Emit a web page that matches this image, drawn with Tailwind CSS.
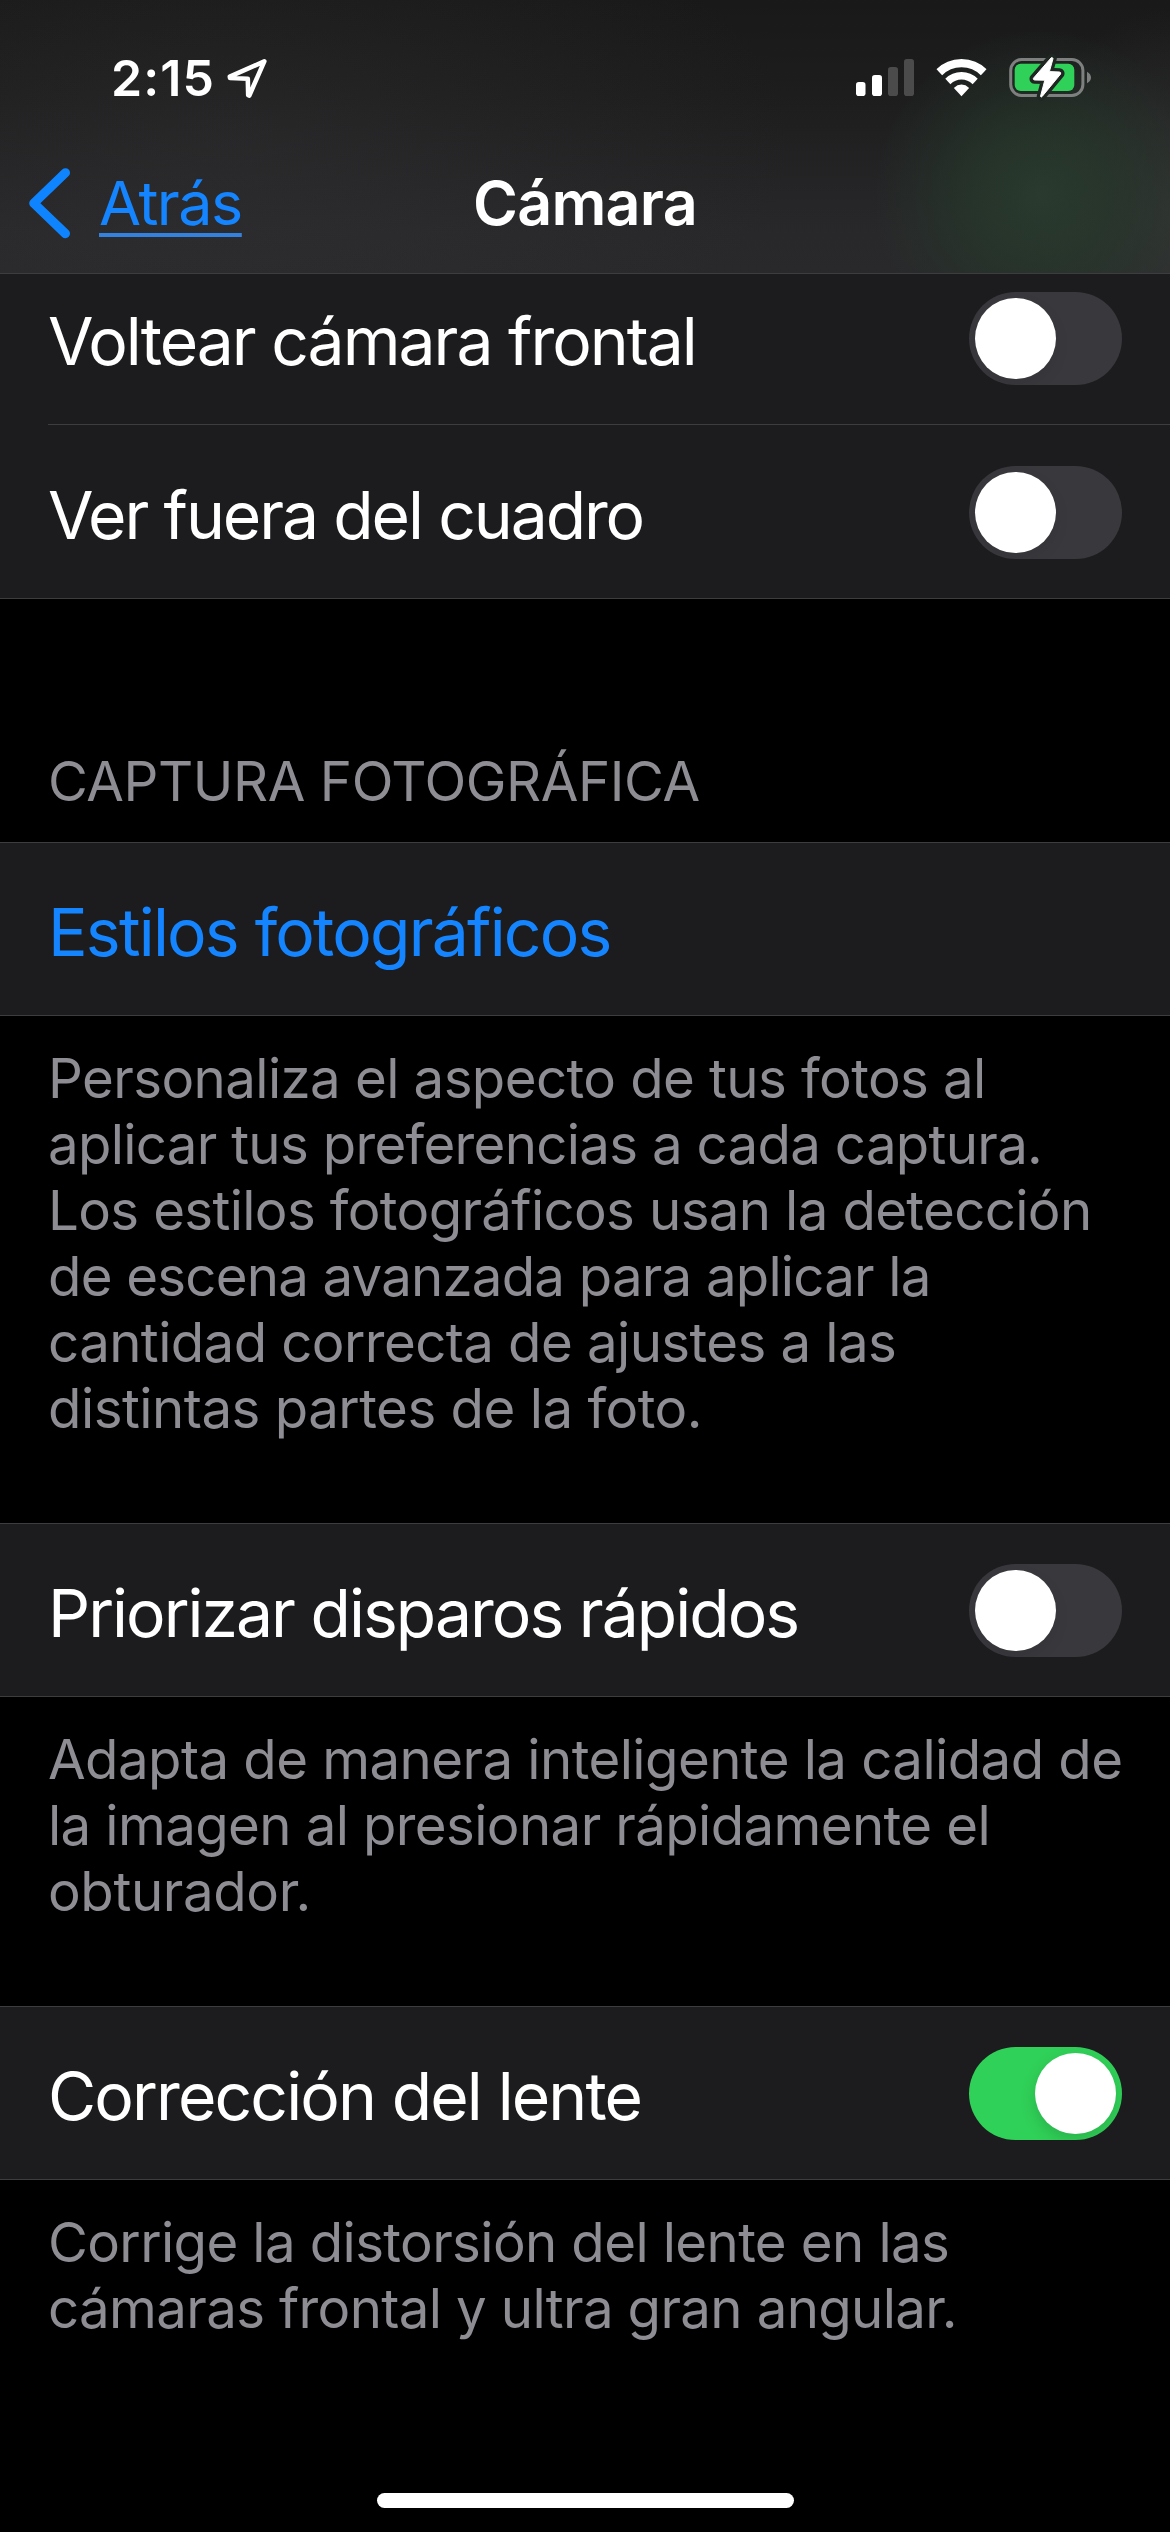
<!DOCTYPE html>
<html lang="es">
<head>
<meta charset="utf-8">
<title>Cámara</title>
<script src="https://cdn.jsdelivr.net/npm/@tailwindcss/browser@4"></script>
</head>
<body class="bg-black">
<div class="flex h-[2532px] w-[1170px] flex-col overflow-hidden bg-black font-['Inter',sans-serif] text-white">

  <!-- Status bar and navigation bar -->
  <header class="h-[274px] shrink-0 border-b border-[#3d3d40] bg-[radial-gradient(ellipse_165px_165px_at_1040px_195px,rgba(42,60,47,0.9)_0%,rgba(38,56,43,0.75)_40%,rgba(36,50,40,0)_100%),radial-gradient(ellipse_150px_200px_at_1170px_210px,rgba(54,56,55,0.7)_0%,rgba(50,50,50,0)_100%),radial-gradient(ellipse_560px_260px_at_230px_140px,rgba(60,60,62,0.28)_0%,rgba(50,50,52,0)_100%),linear-gradient(to_bottom,#19191a_0%,#1d1d1e_35%,#28282a_85%,#29292b_100%)]">
    <div class="flex h-[118px] items-start justify-between pr-[79px] pl-[111px]">
      <div class="flex items-start gap-[11px] pt-[53px]">
        <span class="w-[104px] text-[50px] leading-[50px] font-semibold tracking-[1.1px]">2:15</span>
        <svg class="mt-[5px]" width="42" height="42" viewBox="225 58 42 42" fill="none" stroke="#fff" stroke-width="4.6" stroke-linejoin="round"><path d="M263.3 61.4 L228.8 76.6 L229 78 L246.8 78.8 L247.2 95.2 L248.3 95.6 Z"/></svg>
      </div>
      <svg class="mt-[54px]" width="236" height="48" viewBox="855 54 236 48">
        <defs><clipPath id="wedge"><path d="M961.5 96.3 L921.5 53 H1001.5 Z"/></clipPath></defs>
        <rect x="856" y="82" width="9.5" height="14" rx="2.8" fill="#fff"/>
        <rect x="872" y="75" width="10" height="21" rx="2.8" fill="#fff"/>
        <rect x="888" y="67" width="10" height="29" rx="2.8" fill="#4b4b4c"/>
        <rect x="904" y="59" width="10" height="37" rx="2.8" fill="#4b4b4c"/>
        <g clip-path="url(#wedge)">
          <circle cx="961.5" cy="95" r="31.8" fill="none" stroke="#fff" stroke-width="8.3"/>
          <circle cx="961.5" cy="95" r="19.2" fill="none" stroke="#fff" stroke-width="7.6"/>
          <circle cx="961.5" cy="95" r="10.4" fill="#fff"/>
        </g>
        <rect x="1010.7" y="59.5" width="72.2" height="36" rx="11" fill="none" stroke="#7e807f" stroke-width="3"/>
        <path d="M1087 71.7 Q1091 74 1091 77.5 Q1091 81 1087 83.3 Z" fill="#7e807f"/>
        <rect x="1014.7" y="63.7" width="59.6" height="27.3" rx="6" fill="#30d158"/>
        <path d="M1051 58 L1033.4 78.3 Q1033 79.8 1034.6 80 L1044.8 80.2 L1040.5 96.4 Q1041.2 97.6 1042.2 96.4 L1060.6 74 Q1061.2 72.2 1059.4 72 L1049.4 71.6 L1053 58.6 Q1052.4 56.8 1051 58 Z" fill="#1f2722" stroke="#1f2722" stroke-width="7.6" stroke-linejoin="round"/>
        <path d="M1051 58 L1033.4 78.3 Q1033 79.8 1034.6 80 L1044.8 80.2 L1040.5 96.4 Q1041.2 97.6 1042.2 96.4 L1060.6 74 Q1061.2 72.2 1059.4 72 L1049.4 71.6 L1053 58.6 Q1052.4 56.8 1051 58 Z" fill="#fff" stroke="#fff" stroke-width="1" stroke-linejoin="round"/>
      </svg>
    </div>
    <nav class="grid grid-cols-3 items-start">
      <a class="flex items-start pl-[27px] text-[#1484ff]">
        <svg class="mt-[48px]" width="46" height="74" viewBox="27 166 46 74" fill="none" stroke="#0f84ff" stroke-width="9.2" stroke-linecap="round" stroke-linejoin="round"><path d="M65.4 172.8 L33.8 203.2 L65.4 233.6"/></svg>
        <span class="mt-[47px] ml-[26px] text-[61px] leading-[76px] tracking-[-1.5px] underline decoration-[#3382e0] decoration-[4px] underline-offset-[8px]">Atrás</span>
      </a>
      <h1 class="pt-[47px] text-center text-[61px] leading-[76px] font-semibold tracking-[-0.8px]">Cámara</h1>
    </nav>
  </header>

  <main class="flex flex-col">
    <section class="bg-[#1c1c1e]">
      <div class="pl-12">
        <div class="flex h-[151px] items-start justify-between border-b border-[#3d3d40] pr-12">
          <span class="pt-[27px] text-[66px] leading-[80px] tracking-[-2.0px]">Voltear cámara frontal</span>
          <span class="mt-[18px] h-[93px] w-[153px] overflow-hidden rounded-full bg-[#39393d] p-[6px]"><span class="block size-[81px] rounded-full bg-white shadow-[0_6px_16px_rgba(0,0,0,0.07)]"></span></span>
        </div>
      </div>
      <div class="flex h-[174px] items-start justify-between border-b border-[#3d3d40] px-12">
        <span class="pt-[50px] text-[66px] leading-[80px] tracking-[-2.12px]">Ver fuera del cuadro</span>
        <span class="mt-[41px] h-[93px] w-[153px] overflow-hidden rounded-full bg-[#39393d] p-[6px]"><span class="block size-[81px] rounded-full bg-white shadow-[0_6px_16px_rgba(0,0,0,0.07)]"></span></span>
      </div>
    </section>

    <h2 class="px-12 pt-[149px] pb-[28px] text-[54.6px] leading-[66px] tracking-[-0.44px] text-[#8d8d93]">CAPTURA FOTOGRÁFICA</h2>
    <section class="h-[174px] border-y border-[#3d3d40] bg-[#1c1c1e] px-12">
      <a class="block pt-[49px] text-[66px] leading-[80px] tracking-[-1.8px] text-[#1484ff]">Estilos fotográficos</a>
    </section>
    <p class="px-12 pt-[29px] pb-[82px] text-[54.6px] leading-[66px] whitespace-nowrap text-[#8d8d93]">
      <span class="block tracking-[-0.59px]">Personaliza el aspecto de tus fotos al</span>
      <span class="block tracking-[-0.70px]">aplicar tus preferencias a cada captura.</span>
      <span class="block tracking-[-0.65px]">Los estilos fotográficos usan la detección</span>
      <span class="block tracking-[-0.80px]">de escena avanzada para aplicar la</span>
      <span class="block tracking-[-0.59px]">cantidad correcta de ajustes a las</span>
      <span class="block tracking-[-0.50px]">distintas partes de la foto.</span>
    </p>

    <section class="flex h-[174px] items-start justify-between border-y border-[#3d3d40] bg-[#1c1c1e] px-12">
      <span class="pt-[49px] text-[66px] leading-[80px] tracking-[-1.98px]">Priorizar disparos rápidos</span>
      <span class="mt-[40px] h-[93px] w-[153px] overflow-hidden rounded-full bg-[#39393d] p-[6px]"><span class="block size-[81px] rounded-full bg-white shadow-[0_6px_16px_rgba(0,0,0,0.07)]"></span></span>
    </section>
    <p class="px-12 pt-[29px] pb-[82px] text-[54.6px] leading-[66px] whitespace-nowrap text-[#8d8d93]">
      <span class="block tracking-[-0.57px]">Adapta de manera inteligente la calidad de</span>
      <span class="block tracking-[-0.62px]">la imagen al presionar rápidamente el</span>
      <span class="block tracking-[-0.37px]">obturador.</span>
    </p>

    <section class="flex h-[174px] items-start justify-between border-y border-[#3d3d40] bg-[#1c1c1e] px-12">
      <span class="pt-[49px] text-[66px] leading-[80px] tracking-[-1.88px]">Corrección del lente</span>
      <span class="mt-[40px] flex h-[93px] w-[153px] justify-end overflow-hidden rounded-full bg-[#30d158] p-[6px]"><span class="block size-[81px] rounded-full bg-white shadow-[0_6px_16px_rgba(0,0,0,0.15)]"></span></span>
    </section>
    <p class="px-12 pt-[29px] text-[54.6px] leading-[66px] whitespace-nowrap text-[#8d8d93]">
      <span class="block tracking-[-0.62px]">Corrige la distorsión del lente en las</span>
      <span class="block tracking-[-0.65px]">cámaras frontal y ultra gran angular.</span>
    </p>
  </main>

  <!-- Home indicator -->
  <div class="mx-auto mt-auto mb-[24px] h-[15px] w-[417px] shrink-0 rounded-full bg-white"></div>
</div>
</body>
</html>
